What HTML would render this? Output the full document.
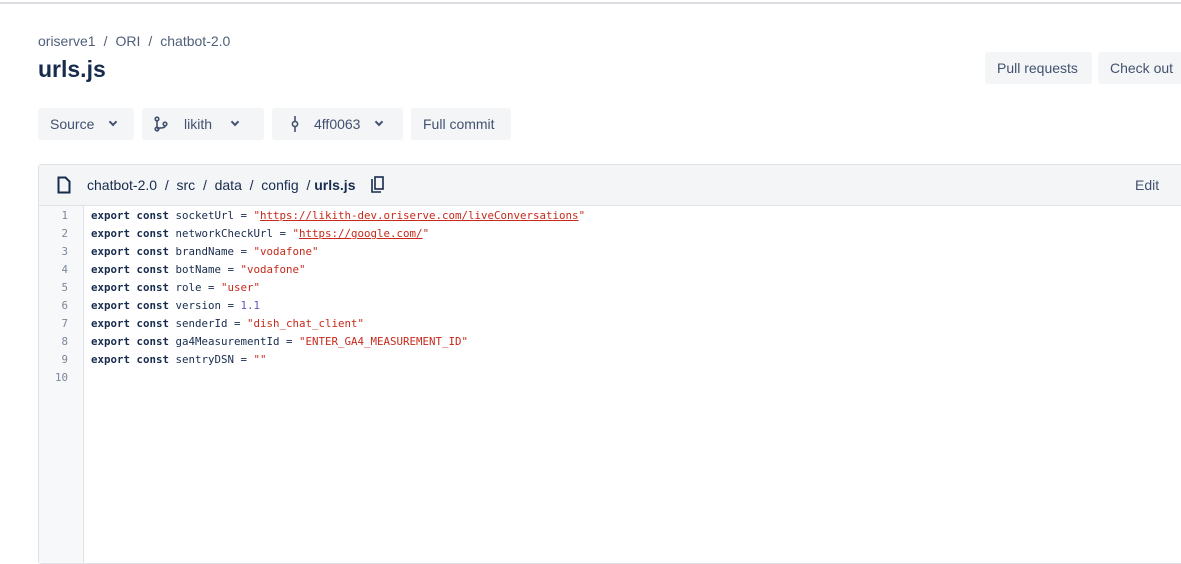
<!DOCTYPE html>
<html><head><meta charset="utf-8"><style>
*{box-sizing:border-box;margin:0;padding:0}
body{width:1181px;height:518px;overflow:hidden;background:#fff;font-family:"Liberation Sans",sans-serif;color:#172b4d;position:relative}
.topline{position:absolute;left:0;top:2px;width:1181px;height:2px;background:#dcdde0}
.crumb{position:absolute;left:38px;top:33px;font-size:14px;color:#505f79}
.crumb span{margin:0 8px}
h1{position:absolute;left:38px;top:56px;font-size:23px;font-weight:bold;color:#172b4d}
.btn{position:absolute;height:32px;background:#f4f5f7;border-radius:3px;font-size:14px;color:#42526e;display:flex;align-items:center;padding:0 12px}
.chev{display:inline-block;width:6px;height:6px;border-right:2px solid #42526e;border-bottom:2px solid #42526e;transform:rotate(45deg);margin-left:16px;margin-top:-4px}
.box{position:absolute;left:38px;top:164px;width:1160px;height:400px;border:1px solid #dfe1e6;border-radius:3px}
.hdr{height:41px;background:#f4f5f7;border-bottom:1px solid #dfe1e6;display:flex;align-items:center;font-size:14px;color:#172b4d;position:relative}
.gut{position:absolute;left:0;top:41px;width:45px;bottom:0;background:#f7f8f9;border-right:1px solid #dfe1e6}
.ln{position:absolute;left:0;width:29px;text-align:right;font-family:"DejaVu Sans Mono",monospace;font-size:10.8px;color:#7a869a}
.code{position:absolute;left:52px;top:42px;font-family:"DejaVu Sans Mono",monospace;font-size:10.8px;line-height:18px;color:#172b4d;white-space:pre}
.k{font-weight:bold}.s{color:#c7291a}.n{color:#6554c0}
.u{text-decoration:underline;text-decoration-color:#c7291a}
</style></head><body>
<div class="topline"></div>
<div class="crumb">oriserve1<span>/</span>ORI<span>/</span>chatbot-2.0</div>
<h1>urls.js</h1>
<div class="btn" style="left:985px;top:52px;width:107px">Pull requests</div>
<div class="btn" style="left:1098px;top:52px;width:100px">Check out</div>
<div class="btn" style="left:38px;top:108px;width:96px">Source<i class="chev"></i></div>
<div class="btn" style="left:142px;top:108px;width:122px"><svg width="14" height="16" viewBox="0 0 14 16" style="margin-right:16px"><g fill="none" stroke="#42526e" stroke-width="1.6"><circle cx="3" cy="3" r="1.8"/><circle cx="3" cy="13" r="1.8"/><circle cx="11" cy="8" r="1.8"/><path d="M3 5v6M11 10c0 3-6 1-8 3"/></g></svg>likith<i class="chev" style="margin-left:20px"></i></div>
<div class="btn" style="left:272px;top:108px;width:131px"><svg width="10" height="16" viewBox="0 0 10 16" style="margin-left:6px;margin-right:14px"><g fill="none" stroke="#42526e" stroke-width="1.6"><circle cx="5" cy="8" r="2.6"/><path d="M5 0v5.4M5 10.6V16"/></g></svg>4ff0063<i class="chev"></i></div>
<div class="btn" style="left:411px;top:108px;width:100px">Full commit</div>
<div class="box">
<div class="hdr">
<svg width="14" height="18" viewBox="0 0 14 18" style="margin-left:18px;margin-right:16px"><path d="M1.5 1.5h7l4 4v11h-11z" fill="none" stroke="#172b4d" stroke-width="2"/></svg>
chatbot-2.0&nbsp; /&nbsp; src&nbsp; /&nbsp; data&nbsp; /&nbsp; config&nbsp; /&nbsp; <b>urls.js</b>
<svg width="14" height="18" viewBox="0 0 14 18" style="margin-left:16px"><g fill="none" stroke="#172b4d" stroke-width="1.6"><path d="M1 3v13h9"/><rect x="4" y="1" width="8" height="12"/></g></svg>
<span style="position:absolute;left:1096px;color:#42526e">Edit</span>
</div>
<div class="gut">
<div class="ln" style="top:3px">1</div><div class="ln" style="top:21px">2</div><div class="ln" style="top:39px">3</div><div class="ln" style="top:57px">4</div><div class="ln" style="top:75px">5</div><div class="ln" style="top:93px">6</div><div class="ln" style="top:111px">7</div><div class="ln" style="top:129px">8</div><div class="ln" style="top:147px">9</div><div class="ln" style="top:165px">10</div>
</div>
<div class="code"><span class="k">export const</span> socketUrl = <span class="s">"<span class="u">https://likith-dev.oriserve.com/liveConversations</span>"</span>
<span class="k">export const</span> networkCheckUrl = <span class="s">"<span class="u">https://google.com/</span>"</span>
<span class="k">export const</span> brandName = <span class="s">"vodafone"</span>
<span class="k">export const</span> botName = <span class="s">"vodafone"</span>
<span class="k">export const</span> role = <span class="s">"user"</span>
<span class="k">export const</span> version = <span class="n">1.1</span>
<span class="k">export const</span> senderId = <span class="s">"dish_chat_client"</span>
<span class="k">export const</span> ga4MeasurementId = <span class="s">"ENTER_GA4_MEASUREMENT_ID"</span>
<span class="k">export const</span> sentryDSN = <span class="s">""</span>
</div>
</div>
</body></html>
